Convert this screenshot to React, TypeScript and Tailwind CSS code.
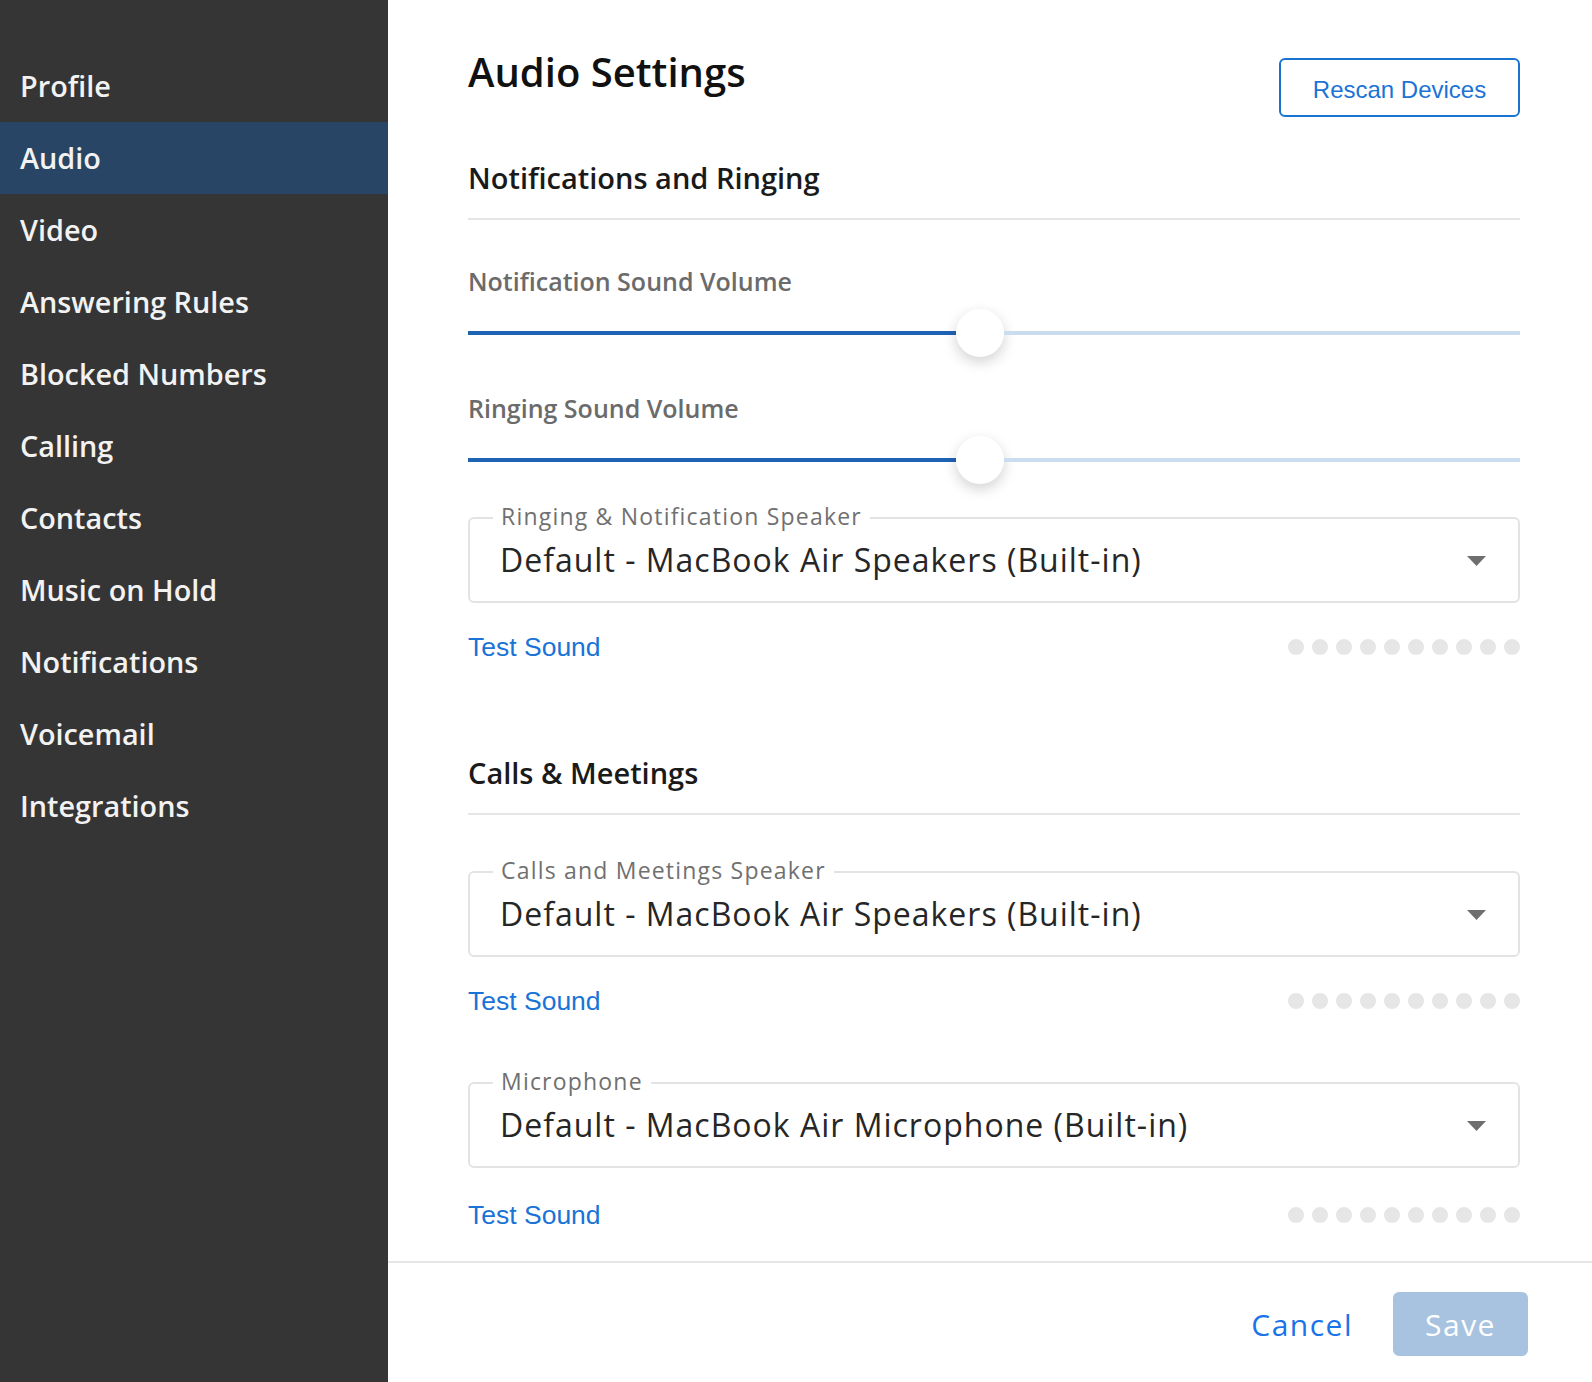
import React from "react";

const navItems = [
  "Profile",
  "Audio",
  "Video",
  "Answering Rules",
  "Blocked Numbers",
  "Calling",
  "Contacts",
  "Music on Hold",
  "Notifications",
  "Voicemail",
  "Integrations",
];

const OPEN = { fontFamily: '"Open Sans", "Noto Sans", sans-serif' };
const ARIAL = { fontFamily: '"Liberation Sans", Arial, sans-serif' };

function Slider() {
  return (
    <div className="flex h-[48px] items-center">
      <div className="h-[4px] w-[488px] bg-[#1f63b4]" />
      <div className="h-[48px] w-[48px] shrink-0 rounded-full bg-white shadow-[0_5px_14px_rgba(0,0,0,0.18)]" />
      <div className="h-[4px] flex-1 bg-[#cadcef]" />
    </div>
  );
}

function SelectBox({ label, value }: { label: string; value: string }) {
  return (
    <div className="relative flex h-[86px] items-center justify-between rounded-[6px] border-2 border-[#e3e3e3] pl-[30px] pr-[32px]">
      <span
        className="absolute left-[23px] top-[-18px] bg-white px-[8px] text-[23px] leading-[30px] tracking-[1.2px] text-[#707070]"
        style={OPEN}
      >
        {label}
      </span>
      <span className="text-[32px] leading-[40px] tracking-[1px] text-[#262626]" style={OPEN}>
        {value}
      </span>
      <svg width="19" height="10" viewBox="0 0 19 10" className="mt-[2px]">
        <polygon points="0,0 19,0 9.5,10" fill="#6e6e6e" />
      </svg>
    </div>
  );
}

function TestRow() {
  return (
    <div className="flex h-[40px] items-center justify-between">
      <span className="text-[26.5px] leading-[40px] text-[#1a73d6]" style={ARIAL}>
        Test Sound
      </span>
      <div className="flex gap-[8px]">
        {Array.from({ length: 10 }).map((_, i) => (
          <div key={i} className="h-[16px] w-[16px] rounded-full bg-[#e6e6e6]" />
        ))}
      </div>
    </div>
  );
}

export default function App() {
  return (
    <div className="flex h-[1382px] w-[1592px] overflow-hidden bg-white" style={OPEN}>
      <aside className="w-[388px] shrink-0 bg-[#353535] pt-[50px]">
        {navItems.map((item) => (
          <div
            key={item}
            className={`flex h-[72px] items-center pl-[20px] text-[28.8px] font-semibold leading-[72px] text-[#f2f2f2] ${
              item === "Audio" ? "bg-[#284565]" : ""
            }`}
          >
            {item}
          </div>
        ))}
      </aside>
      <main className="flex flex-1 flex-col">
        <div className="flex-1 pl-[80px] pr-[72px] pt-[48px]">
          <div className="flex items-start justify-between">
            <h1 className="text-[40px] font-semibold leading-[48px] text-[#111]">Audio Settings</h1>
            <button
              className="mt-[10px] flex h-[59px] w-[241px] items-center justify-center rounded-[6px] border-2 border-[#1a73d0] pt-[4px] text-[24px] text-[#1a73d6]"
              style={ARIAL}
            >
              Rescan Devices
            </button>
          </div>

          <div className="mt-[43px] border-b-2 border-[#e6e6e6] pb-[22px]">
            <h2 className="text-[29px] font-semibold leading-[36px] text-[#1a1a1a]">
              Notifications and Ringing
            </h2>
          </div>

          <div className="mt-[45px] text-[25px] font-semibold leading-[32px] text-[#6b6b6b]">
            Notification Sound Volume
          </div>
          <div className="mt-[12px]">
            <Slider />
          </div>

          <div className="mt-[35px] text-[25px] font-semibold leading-[32px] text-[#6b6b6b]">
            Ringing Sound Volume
          </div>
          <div className="mt-[12px]">
            <Slider />
          </div>

          <div className="mt-[33px]">
            <SelectBox
              label="Ringing & Notification Speaker"
              value="Default - MacBook Air Speakers (Built-in)"
            />
          </div>
          <div className="mt-[24px]">
            <TestRow />
          </div>

          <div className="mt-[88px] border-b-2 border-[#e6e6e6] pb-[22px]">
            <h2 className="text-[29px] font-semibold leading-[36px] text-[#1a1a1a]">Calls &amp; Meetings</h2>
          </div>

          <div className="mt-[56px]">
            <SelectBox
              label="Calls and Meetings Speaker"
              value="Default - MacBook Air Speakers (Built-in)"
            />
          </div>
          <div className="mt-[24px]">
            <TestRow />
          </div>

          <div className="mt-[61px]">
            <SelectBox label="Microphone" value="Default - MacBook Air Microphone (Built-in)" />
          </div>
          <div className="mt-[27px]">
            <TestRow />
          </div>
        </div>

        <footer className="flex h-[121px] shrink-0 items-start justify-end gap-[40px] border-t-2 border-[#e6e6e6] pr-[64px] pt-[29px]">
          <button className="h-[64px] text-[30px] tracking-[1.5px] text-[#1a73e8]">Cancel</button>
          <button className="h-[64px] w-[135px] rounded-[6px] bg-[#a8c3e0] text-[30px] tracking-[1.5px] text-white">
            Save
          </button>
        </footer>
      </main>
    </div>
  );
}
